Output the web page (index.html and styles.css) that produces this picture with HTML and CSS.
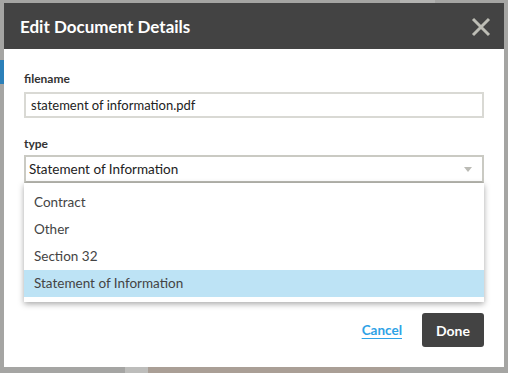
FILE: index.html
```html
<!DOCTYPE html>
<html lang="en">
<head>
  <meta charset="UTF-8">
  <title>Edit Document Details</title>
  <link rel="stylesheet" href="styles.css">
</head>
<body>
  <div class="modal">
    <div class="modal-header">
      <h2>Edit Document Details</h2>
      <span class="close">
        <svg width="20" height="20" viewBox="0 0 20 20"><path d="M2 2L18 18M18 2L2 18" stroke="#bdbdb5" stroke-width="3" fill="none"/></svg>
      </span>
    </div>
    <div class="modal-body">
      <label class="field-label">filename</label>
      <div class="text-input">statement of information.pdf</div>

      <label class="field-label type-label">type</label>
      <div class="select">
        <span>Statement of Information</span>
        <span class="arrow"></span>
      </div>
      <ul class="options">
        <li>Contract</li>
        <li>Other</li>
        <li>Section 32</li>
        <li class="selected">Statement of Information</li>
      </ul>

      <div class="actions">
        <a class="cancel" href="#">Cancel</a>
        <button class="done">Done</button>
      </div>
    </div>
  </div>
</body>
</html>
```

FILE: styles.css
```css
body {
  margin: 0;
  padding: 3px 4px 6px;
  font-family: Lato, 'Open Sans', Arial, sans-serif;
  background:
    linear-gradient(#2c80b9, #2c80b9) 0 60px / 4px 24px no-repeat,
    linear-gradient(#bdbdbb, #bdbdbb) 125px 367px / 23px 6px no-repeat,
    linear-gradient(#aa9f96, #aa9f96) 148px 367px / 252px 6px no-repeat,
    linear-gradient(#b3b3b1, #b3b3b1) 400px 0 / 35px 3px no-repeat,
    #a5a5a3;
}
.modal {
  width: 500px;
  height: 364px;
  background: #fff;
  display: flex;
  flex-direction: column;
}
.modal-header {
  height: 46px;
  background: #434343;
  display: flex;
  align-items: center;
  justify-content: space-between;
  padding: 0 13px 0 16px;
}
.modal-header h2 {
  margin: 0;
  color: #fff;
  font-size: 17px;
  font-weight: bold;
}
.close {
  display: flex;
  margin-top: 2px;
}
.modal-body {
  padding: 23px 20px 0;
  display: flex;
  flex-direction: column;
}
.field-label {
  font-size: 12px;
  font-weight: bold;
  color: #333;
  line-height: 14px;
  margin-bottom: 6px;
}
.type-label {
  margin-top: 19px;
  margin-bottom: 4px;
}
.text-input {
  height: 22px;
  border: 2px solid #d9d9d4;
  padding: 0 5px;
  font-size: 13px;
  line-height: 22px;
  color: #222;
}
.select {
  height: 24px;
  border: 2px solid #cacac3;
  border-bottom-color: #b9b9b2;
  padding: 0 10px 0 3px;
  font-size: 13.5px;
  line-height: 24px;
  color: #222;
  display: flex;
  align-items: center;
  justify-content: space-between;
}
.arrow {
  width: 0;
  height: 0;
  border-left: 4px solid transparent;
  border-right: 4px solid transparent;
  border-top: 5px solid #bbbbb5;
}
.options {
  list-style: none;
  margin: 0;
  padding: 6px 0 5px;
  background: #fff;
  box-shadow: 0 2px 6px rgba(0, 0, 0, 0.35);
}
.options li {
  height: 27px;
  line-height: 27px;
  padding-left: 10px;
  font-size: 13.5px;
  color: #444;
}
.options li.selected {
  background: #bde3f5;
}
.actions {
  display: flex;
  justify-content: flex-end;
  align-items: center;
  margin-top: 11px;
}
.cancel {
  color: #2ea2e6;
  font-size: 13.5px;
  font-weight: bold;
  text-decoration: underline;
  text-underline-offset: 3px;
  margin-right: 20px;
}
.done {
  width: 62px;
  height: 34px;
  border: none;
  border-radius: 3px;
  background: #434343;
  color: #fff;
  font-family: inherit;
  font-size: 14px;
  font-weight: bold;
}
```
